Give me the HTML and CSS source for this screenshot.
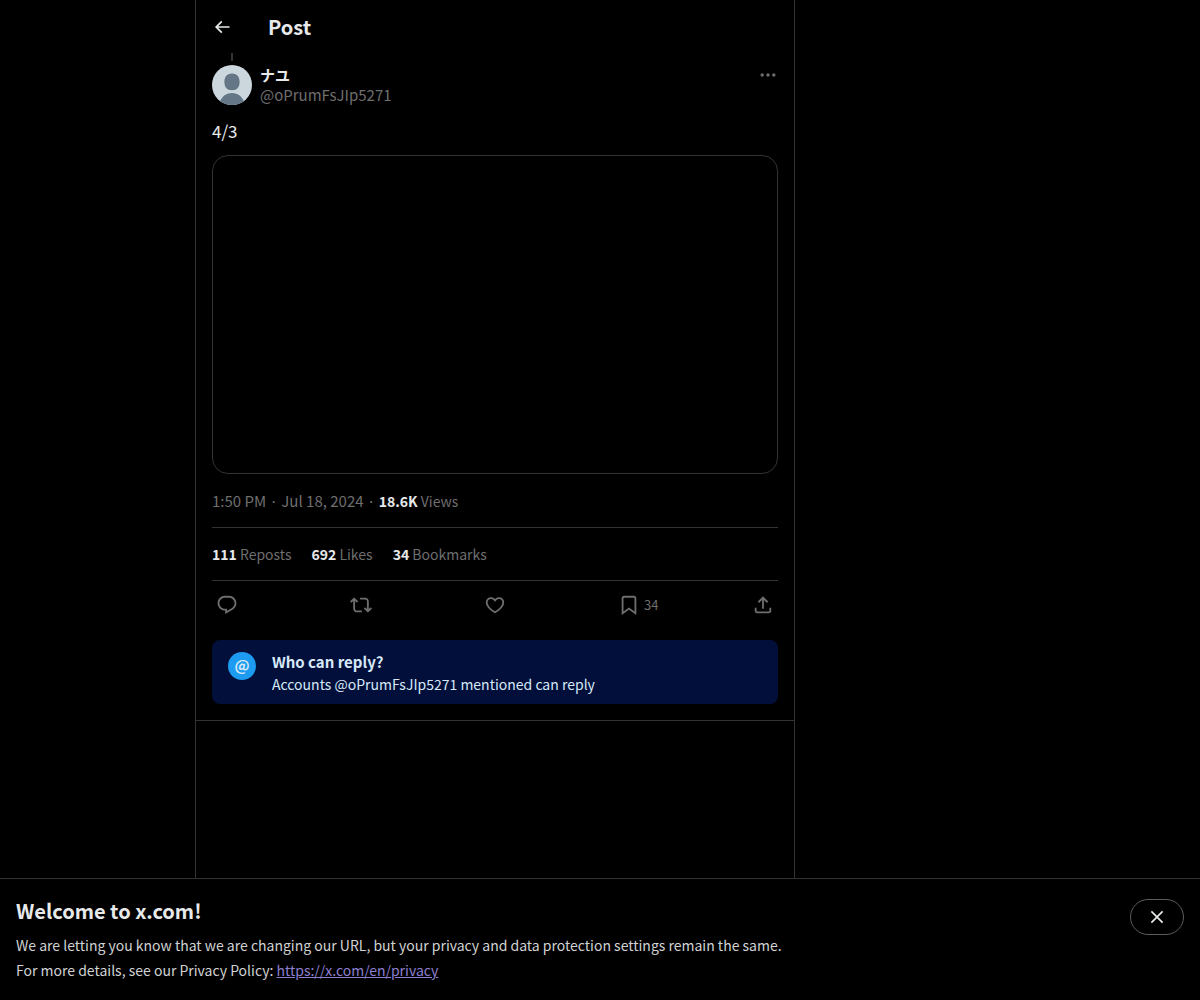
FILE: index.html
```html
<!DOCTYPE html>
<html lang="en">

<head>
    <meta charset="UTF-8">
    <meta name="viewport" content="width=device-width, initial-scale=1.0">
    <title>Post / X</title>
    <link rel="stylesheet" href="styles.css">
</head>

<body>
    <div class="layout">
        <main class="column">
            <header class="top-bar">
                <button type="button" class="icon-button" aria-label="Back">
                    <svg viewBox="0 0 24 24"><path d="M7.414 13l5.043 5.04-1.414 1.42L3.586 12l7.457-7.46 1.414 1.42L7.414 11H21v2H7.414z"/></svg>
                </button>
                <h1>Post</h1>
            </header>

            <article class="post">
                <div class="thread-line"></div>
                <div class="author">
                    <svg class="avatar" viewBox="0 0 40 40">
                        <rect width="40" height="40" fill="#ccd6dd"/>
                        <path fill="#657786" d="M20 8.500c4.500 0 7.600 2.900 7.600 8.200 0 5.300-2.300 8.500-7.600 8.500s-7.600-3.200-7.600-8.500c0-5.300 3.100-8.200 7.600-8.200zM7.500 38c2-6.500 6.500-10 12.500-10s10.500 3.500 12.500 10v2h-25z"/>
                    </svg>
                    <div class="author-name">
                        <strong>ナユ</strong>
                        <span>@oPrumFsJIp5271</span>
                    </div>
                    <button type="button" class="icon-button" aria-label="More">
                        <svg viewBox="0 0 24 24"><path d="M3 12c0-1.100.900-2 2-2s2 .900 2 2-.900 2-2 2-2-.900-2-2zm9 2c1.100 0 2-.900 2-2s-.900-2-2-2-2 .900-2 2 .900 2 2 2zm7 0c1.100 0 2-.900 2-2s-.900-2-2-2-2 .900-2 2 .900 2 2 2z"/></svg>
                    </button>
                </div>

                <p class="post-text">4/3</p>
                <div class="media"></div>

                <p class="post-meta">1:50 PM · Jul 18, 2024 · <span class="views"><strong>18.6K</strong> Views</span></p>

                <div class="stats">
                    <span><strong>111</strong> Reposts</span>
                    <span><strong>692</strong> Likes</span>
                    <span><strong>34</strong> Bookmarks</span>
                </div>

                <div class="actions">
                    <button type="button" aria-label="Reply">
                        <svg viewBox="0 0 24 24"><path d="M1.751 10c0-4.420 3.584-8 8.005-8h4.366c4.490 0 8.129 3.640 8.129 8.130 0 2.960-1.607 5.680-4.196 7.110l-8.054 4.460v-3.690h-.067c-4.490.100-8.183-3.510-8.183-8.010zm8.005-6c-3.317 0-6.005 2.690-6.005 6 0 3.370 2.770 6.080 6.138 6.010l.351-.010h1.761v2.300l5.087-2.810c1.951-1.080 3.163-3.130 3.163-5.360 0-3.390-2.744-6.130-6.129-6.130H9.756z"/></svg>
                    </button>
                    <button type="button" aria-label="Repost">
                        <svg viewBox="0 0 24 24"><path d="M4.500 3.880l4.432 4.140-1.364 1.460L5.500 7.550V16c0 1.100.896 2 2 2H13v2H7.500c-2.209 0-4-1.790-4-4V7.550L1.432 9.480.068 8.020 4.500 3.880zM16.500 6H11V4h5.500c2.209 0 4 1.790 4 4v8.450l2.068-1.930 1.364 1.460-4.432 4.140-4.432-4.140 1.364-1.460 2.068 1.930V8c0-1.100-.896-2-2-2z"/></svg>
                    </button>
                    <button type="button" aria-label="Like">
                        <svg viewBox="0 0 24 24"><path d="M16.697 5.500c-1.222-.060-2.679.510-3.890 2.160l-.805 1.090-.806-1.090C9.984 6.010 8.526 5.440 7.304 5.500c-1.243.070-2.349.780-2.910 1.910-.552 1.120-.633 2.780.479 4.820 1.074 1.970 3.257 4.270 7.129 6.610 3.870-2.340 6.052-4.640 7.126-6.610 1.111-2.040 1.030-3.700.477-4.820-.561-1.130-1.666-1.840-2.908-1.910zm4.187 7.690c-1.351 2.480-4.001 5.120-8.379 7.670l-.503.300-.504-.300c-4.379-2.550-7.029-5.190-8.382-7.670-1.360-2.500-1.410-4.860-.514-6.670.887-1.790 2.647-2.910 4.601-3.010 1.651-.090 3.368.560 4.798 2.010 1.429-1.450 3.146-2.100 4.796-2.010 1.954.100 3.714 1.220 4.601 3.010.896 1.810.846 4.170-.514 6.670z"/></svg>
                    </button>
                    <button type="button" aria-label="Bookmark">
                        <svg viewBox="0 0 24 24"><path d="M4 4.500C4 3.120 5.119 2 6.500 2h11C18.881 2 20 3.120 20 4.500v18.440l-8-5.710-8 5.710V4.500zM6.500 4c-.276 0-.500.220-.500.500v14.560l6-4.290 6 4.290V4.500c0-.280-.224-.500-.500-.500h-11z"/></svg>
                        <span>34</span>
                    </button>
                    <button type="button" aria-label="Share">
                        <svg viewBox="0 0 24 24"><path d="M12 2.590l5.700 5.700-1.410 1.420L13 6.410V16h-2V6.410l-3.300 3.300-1.410-1.420L12 2.590zM21 15l-.020 3.510c0 1.380-1.120 2.490-2.500 2.490H5.500C4.110 21 3 19.880 3 18.500V15h2v3.500c0 .280.220.500.500.500h12.980c.280 0 .500-.220.500-.500L19 15h2z"/></svg>
                    </button>
                </div>

                <section class="reply-info">
                    <div class="reply-badge">@</div>
                    <div>
                        <h2>Who can reply?</h2>
                        <p>Accounts @oPrumFsJIp5271 mentioned can reply</p>
                    </div>
                </section>
            </article>
        </main>
    </div>

    <aside class="notice">
        <div>
            <h2>Welcome to x.com!</h2>
            <p>We are letting you know that we are changing our URL, but your privacy and data protection settings remain the same.</p>
            <p>For more details, see our Privacy Policy: <a href="https://x.com/en/privacy">https://x.com/en/privacy</a></p>
        </div>
        <button type="button" class="close-button" aria-label="Close">
            <svg viewBox="0 0 24 24"><path d="M10.590 12L4.540 5.960l1.420-1.420L12 10.590l6.040-6.050 1.420 1.420L13.410 12l6.050 6.040-1.420 1.420L12 13.410l-6.040 6.050-1.420-1.420L10.590 12z"/></svg>
        </button>
    </aside>
</body>

</html>
```
FILE: styles.css
```css
* {
    margin: 0;
    padding: 0;
    box-sizing: border-box;
}

body {
    font-family: "Noto Sans CJK JP", "Noto Sans", sans-serif;
    font-size: 15px;
    line-height: 20px;
    background: #000;
    color: #e7e9ea;
}

button {
    font: inherit;
    color: inherit;
    background: none;
    border: none;
    cursor: pointer;
}

svg {
    display: block;
    width: 20px;
    height: 20px;
    fill: currentColor;
}

strong {
    color: #e7e9ea;
}

.layout {
    display: grid;
    grid-template-columns: 13fr minmax(0, 600px) 27fr;
    min-height: 100vh;
}

.column {
    grid-column: 2;
    border-left: 1px solid #333;
    border-right: 1px solid #333;
}

.top-bar {
    display: flex;
    align-items: center;
    gap: 36px;
    height: 53px;
    padding: 0 16px;
}

.top-bar h1 {
    font-size: 20px;
    line-height: 24px;
}

.post {
    padding: 0 16px 16px;
    border-bottom: 1px solid #333;
}

.thread-line {
    width: 2px;
    height: 8px;
    margin: 0 19px 4px;
    background: #333;
}

.author {
    display: flex;
    align-items: flex-start;
    gap: 8px;
    color: #6e6e6e;
}

.avatar {
    width: 40px;
    height: 40px;
    border-radius: 50%;
}

.author-name {
    display: flex;
    flex-direction: column;
    flex: 1;
}

.post-text {
    margin: 14px 0 12px;
    font-size: 17px;
    line-height: 24px;
}

.media {
    aspect-ratio: 566 / 319;
    border: 1px solid #333;
    border-radius: 16px;
}

.post-meta {
    padding: 17px 0 16px;
    border-bottom: 1px solid #333;
    color: #6e6e6e;
}

.views {
    font-size: 14px;
}

.stats {
    display: flex;
    gap: 20px;
    padding: 16px 0;
    border-bottom: 1px solid #333;
    color: #6e6e6e;
    font-size: 14px;
}

.actions {
    display: flex;
    justify-content: space-between;
    height: 48px;
    padding: 0 4px;
    color: #6e6e6e;
    font-size: 13px;
}

.actions button {
    display: flex;
    align-items: center;
    gap: 4px;
    width: 22px;
}

.actions svg {
    width: 22px;
    height: 22px;
    flex: none;
}

.reply-info {
    display: flex;
    gap: 16px;
    margin-top: 11px;
    padding: 12px 16px 10px;
    border-radius: 8px;
    background: #020f3b;
    color: #d6e9f8;
}

.reply-info h2 {
    margin-bottom: 2px;
    font-size: 15px;
    line-height: 20px;
}

.reply-info p {
    font-size: 14px;
}

.reply-badge {
    width: 28px;
    height: 28px;
    border-radius: 50%;
    background: #1d9bf0;
    font-weight: bold;
    line-height: 26px;
    text-align: center;
}

.notice {
    position: fixed;
    bottom: 0;
    left: 0;
    right: 0;
    display: flex;
    justify-content: space-between;
    align-items: flex-start;
    gap: 16px;
    padding: 20px 16px 17px;
    border-top: 1px solid #333;
    background: #000;
}

.notice h2 {
    margin-bottom: 10px;
    font-size: 20px;
    line-height: 24px;
}

.notice p {
    font-size: 14px;
    line-height: 25px;
    color: #d0d2d3;
}

.notice a {
    color: #8c7fd0;
}

.close-button {
    padding: 7px 16px;
    border: 1px solid #5c5c5c;
    border-radius: 18px;
}
```
